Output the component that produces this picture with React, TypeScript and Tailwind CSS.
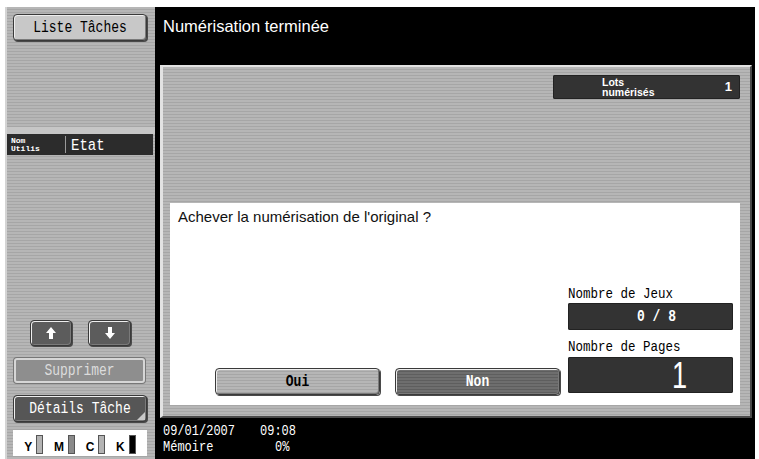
import { ReactNode } from "react";

const mono = "font-['Liberation_Mono','DejaVu_Sans_Mono',monospace]";
const sans = "font-['Liberation_Sans',Arial,sans-serif]";

const stripeLight =
  "bg-[repeating-linear-gradient(180deg,#b6b6b6_0px,#b6b6b6_2px,#a6a6a6_2px,#a6a6a6_3px)]";
const stripeDark =
  "bg-[repeating-linear-gradient(180deg,#6e6e6e_0px,#6e6e6e_2px,#5e5e5e_2px,#5e5e5e_3px)]";

const bevel =
  "border border-[#3a3a3a] rounded-[4px] shadow-[inset_1px_1px_0_#eeeeee,inset_-1px_-1px_0_#7a7a7a,1px_1px_0_#4a4a4a]";

// panel font is a tall narrow bitmap face, stretch the mono a bit
const Tall = ({ children }: { children: ReactNode }) => (
  <span className="inline-block scale-y-[1.22]">{children}</span>
);

const Arrow = ({ down }: { down?: boolean }) => (
  <svg width="10" height="12" viewBox="0 0 10 12" className={down ? "rotate-180" : ""}>
    <polygon points="5,0 10,6 7,6 7,12 3,12 3,6 0,6" fill="#ffffff" />
  </svg>
);

const Toner = ({ letter, bar }: { letter: string; bar: string }) => (
  <div className="flex items-end gap-[4px]">
    <span className={`${sans} text-[12px] font-bold leading-[13px] text-black`}>{letter}</span>
    <span className={`w-[7px] h-[19px] border border-[#555] ${bar}`}></span>
  </div>
);

const DarkBox = ({ children, className }: { children: ReactNode; className: string }) => (
  <div className={`bg-[#333333] rounded-[2px] shadow-[inset_0_0_0_1px_#222] ${className}`}>{children}</div>
);

export default function App() {
  return (
    <div className="w-[759px] h-[459px] bg-white flex pt-[7px] pl-[5px] pr-[4px] overflow-hidden">
      {/* left column */}
      <div className={`w-[150px] h-full flex flex-col border-l-2 border-[#d4d4d4] ${stripeLight}`}>
        <button
          className={`mt-[7px] ml-[6px] w-[134px] h-[27px] bg-[#c8c8c8] ${bevel} ${mono} text-[13px] text-black`}
        >
          <Tall>Liste Tâches</Tall>
        </button>
        <div className="mt-[86px] h-[7px] bg-[#c6c6c6]"></div>
        <div className="h-[21px] mr-[2px] bg-[#2c2c2c] flex items-center text-white">
          <div className={`${mono} w-[58px] pl-[4px] text-[8px] font-bold leading-[8px]`}>
            <div>Nom</div>
            <div>Utilis</div>
          </div>
          <div className="w-px h-[17px] bg-[#9a9a9a]"></div>
          <span className={`${mono} pl-[5px] text-[14px] leading-none`}>
            <Tall>Etat</Tall>
          </span>
        </div>
        <div className="h-[165px]"></div>
        <div className="h-[26px] flex pl-[23px] gap-[16px]">
          <button className={`w-[42px] h-[26px] bg-[#5c5c5c] ${bevel} flex items-center justify-center`}>
            <Arrow />
          </button>
          <button className={`w-[43px] h-[26px] bg-[#5c5c5c] ${bevel} flex items-center justify-center`}>
            <Arrow down />
          </button>
        </div>
        <button
          className={`mt-[12px] ml-[7px] w-[131px] h-[25px] bg-[#8e8e8e] border-2 border-[#d6d6d6] rounded-[3px] shadow-[0_0_0_1px_#777] ${mono} text-[13px] text-[#dcdcdc]`}
        >
          <Tall>Supprimer</Tall>
        </button>
        <button
          className={`relative mt-[12px] ml-[6px] w-[134px] h-[27px] bg-[#565656] ${bevel} ${mono} text-[13px] text-white`}
        >
          <Tall>Détails Tâche</Tall>
          <span className="absolute right-[1px] bottom-[1px] w-0 h-0 border-l-[8px] border-l-transparent border-b-[8px] border-b-[#c8c8c8]"></span>
        </button>
        <div className="mt-[8px] ml-[6px] w-[134px] h-[26px] bg-white flex items-center justify-around px-[6px] pt-[2px]">
          <Toner letter="Y" bar="bg-[#b4b4b4]" />
          <Toner letter="M" bar="bg-[#8a8a8a]" />
          <Toner letter="C" bar="bg-[#b4b4b4]" />
          <Toner letter="K" bar="bg-black" />
        </div>
      </div>

      {/* right column */}
      <div className="flex-1 h-full bg-black flex flex-col">
        <div className={`h-[58px] pl-[8px] pt-[9px] ${sans} text-[16.5px] leading-[20px] text-white`}>
          Numérisation terminée
        </div>
        <div
          className={`h-[353px] ml-[5px] mr-[3px] border-l-[3px] border-t-2 border-r-2 border-b-2 border-l-[#e2e2e2] border-t-[#e2e2e2] border-r-[#4a4a4a] border-b-[#4a4a4a] ${stripeLight} flex flex-col pl-[7px] pr-[10px] pt-[8px]`}
        >
          <DarkBox className="self-end w-[187px] h-[24px] flex items-center text-white">
            <div className={`${sans} ml-[49px] text-[10.5px] font-bold leading-[10.5px]`}>
              <div>Lots</div>
              <div>numérisés</div>
            </div>
            <span className={`${sans} ml-auto mr-[8px] text-[13px] font-bold`}>1</span>
          </DarkBox>
          <div className="mt-auto mb-[11px] h-[202px] bg-white flex flex-col">
            <div className={`pl-[8px] pt-[5px] ${sans} text-[15px] leading-[18px] text-[#111]`}>
              Achever la numérisation de l'original ?
            </div>
            <div className="flex-1"></div>
            <div className="flex items-end pl-[45px] pr-[7px] pb-[10px]">
              <div className="flex gap-[15px]">
                <button className={`w-[165px] h-[27px] ${stripeLight} ${bevel} ${mono} text-[13px] font-bold text-black`}>
                  <Tall>Oui</Tall>
                </button>
                <button className={`w-[165px] h-[27px] ${stripeDark} ${bevel} ${mono} text-[13px] font-bold text-white`}>
                  <Tall>Non</Tall>
                </button>
              </div>
              <div className="ml-auto w-[165px] flex flex-col mb-[2px]">
                <div className={`${mono} text-[12.5px] leading-[16px] text-black`}>
                  <Tall>Nombre de Jeux</Tall>
                </div>
                <DarkBox className={`mt-[1px] h-[27px] flex items-center justify-center pl-[12px] ${mono} text-[13px] font-bold text-white`}>
                  <Tall>0 / 8</Tall>
                </DarkBox>
                <div className={`mt-[9px] ${mono} text-[12.5px] leading-[16px] text-black`}>
                  <Tall>Nombre de Pages</Tall>
                </div>
                <DarkBox className={`mt-[2px] h-[36px] flex items-center justify-end pr-[44px] ${sans} text-[34px] leading-none text-white`}>
                  <span className="inline-block scale-x-[0.8] scale-y-[1.1]">1</span>
                </DarkBox>
              </div>
            </div>
          </div>
        </div>
        <div className={`pl-[8px] pt-[5px] ${mono} text-[12px] leading-[16px] text-white`}>
          <div className="flex">
            <span className="w-[97px]"><Tall>09/01/2007</Tall></span>
            <Tall>09:08</Tall>
          </div>
          <div className="flex">
            <span className="w-[112px]"><Tall>Mémoire</Tall></span>
            <Tall>0%</Tall>
          </div>
        </div>
      </div>
    </div>
  );
}
